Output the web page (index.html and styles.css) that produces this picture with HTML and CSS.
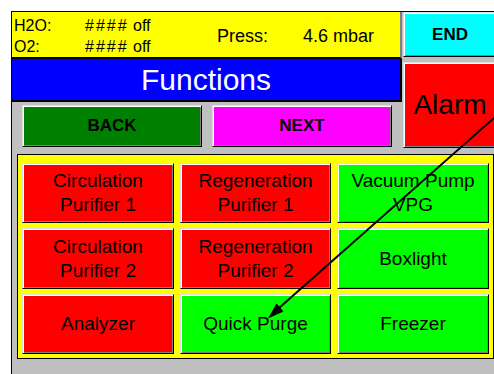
FILE: index.html
```html
<!doctype html>
<html lang="en">
  <head>
    <meta charset="utf-8" />
    <title>Functions</title>
    <link rel="stylesheet" href="styles.css">
  </head>
  <body>
    <div class="screen">
      <div class="top">
        <div class="main">
          <!-- status values -->
          <div class="status">
            <span class="lbl">H2O:</span>
            <span class="val"><span class="hash">####</span> off</span>
            <span class="press">Press:</span>
            <span class="pval">4.6 mbar</span>
            <span class="lbl">O2:</span>
            <span class="val"><span class="hash">####</span> off</span>
          </div>
          <div class="title">Functions</div>
          <div class="nav">
            <button class="btn back">BACK</button>
            <button class="btn next">NEXT</button>
          </div>
        </div>
        <div class="side">
          <button class="btn end">END</button>
          <button class="btn alarm">Alarm</button>
        </div>
      </div>
      <!-- function buttons -->
      <div class="grid">
        <button class="btn fn red">Circulation<br>Purifier 1</button>
        <button class="btn fn red">Regeneration<br>Purifier 1</button>
        <button class="btn fn green">Vacuum Pump<br>VPG</button>
        <button class="btn fn red">Circulation<br>Purifier 2</button>
        <button class="btn fn red">Regeneration<br>Purifier 2</button>
        <button class="btn fn green">Boxlight</button>
        <button class="btn fn red">Analyzer</button>
        <button class="btn fn green">Quick Purge</button>
        <button class="btn fn green">Freezer</button>
      </div>
    </div>
    <svg class="arrow" width="494" height="374" viewBox="0 0 494 374">
      <line x1="500" y1="112.7" x2="279" y2="308" stroke="#000" stroke-width="2" />
      <polygon points="268,318.5 283.5,311.5 276.5,303.5" fill="#000" />
    </svg>
  </body>
</html>
```

FILE: styles.css
```css
/* whole page */
body{
  margin: 0;
  width: 494px;
  height: 374px;
  overflow: hidden;
  background: #fff;
  font-family: "Liberation Sans", Arial, sans-serif;
  position: relative;
}
/* grey panel of the touch screen */
.screen{
  margin: 11px 0 0 11px;
  width: 483px;
  height: 363px;
  border-top: 1px solid #000;
  border-left: 1px solid #000;
  background: #c0c0c0;
}
.top{
  display: flex;
}
.main{
  width: 390px;
}
/* yellow status bar */
.status{
  box-sizing: border-box;
  height: 47px;
  width: 390px;
  padding: 3px 0 0 2px;
  background: #ff0;
  border-bottom: 2px solid #000;
  border-right: 2px solid #808080;
  display: grid;
  grid-template-columns: 71px 132px 86px auto;
  grid-template-rows: 21px 21px;
  font-size: 16px;
  line-height: 21px;
  color: #000;
}
.hash{
  letter-spacing: 2px;
}
.press{
  grid-column: 3;
  grid-row: 1 / 3;
  align-self: center;
  font-size: 18px;
}
.pval{
  grid-column: 4;
  grid-row: 1 / 3;
  align-self: center;
  font-size: 18px;
}
/* blue title */
.title{
  box-sizing: border-box;
  height: 43px;
  width: 390px;
  background: #00f;
  color: #fff;
  border-bottom: 2px solid #000;
  border-right: 2px solid #000;
  font-size: 30px;
  line-height: 41px;
  text-align: center;
}
.nav{
  display: flex;
  gap: 10px;
  padding: 3px 10px 0;
}
/* raised buttons */
.btn{
  box-sizing: border-box;
  margin: 0;
  padding: 0;
  font-family: "Liberation Sans", Arial, sans-serif;
  color: #000;
  border: 1px solid;
  border-color: #dfdfdf #000 #000 #dfdfdf;
  box-shadow: inset 1px 1px 0 #fff, inset -1px -1px 0 #808080;
}
.back, .next{
  width: 180px;
  height: 42px;
  font-size: 17px;
  font-weight: 700;
}
.back{
  background: #008000;
}
.next{
  background: #f0f;
}
.side{
  display: flex;
  flex-direction: column;
  gap: 5px;
  padding-left: 1px;
}
.end{
  width: 94px;
  height: 45px;
  background: #0ff;
  font-size: 17px;
  font-weight: 700;
}
.alarm{
  width: 94px;
  height: 86px;
  background: #f00;
  font-size: 28px;
}
/* yellow frame with the function buttons */
.grid{
  box-sizing: border-box;
  margin: 6px 0 0 5px;
  width: 477px;
  padding: 8px 4px 4px;
  background: #ff0;
  border: 1px solid #000;
  display: grid;
  grid-template-columns: 152px 151px 152px;
  grid-template-rows: 60px 61px 60px;
  gap: 5px 6px;
}
.fn{
  font-size: 19px;
  line-height: 24px;
}
.red{
  background: #f00;
}
.green{
  background: #0f0;
}
/* arrow drawn over the screen */
.arrow{
  position: absolute;
  left: 0;
  top: 0;
}
```
